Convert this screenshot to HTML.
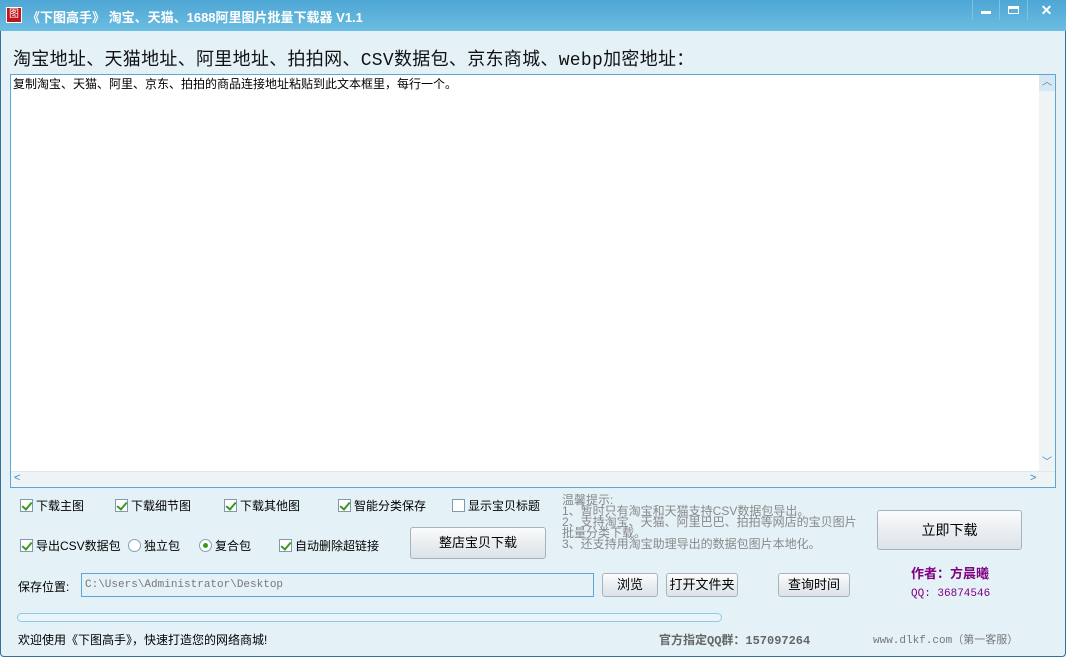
<!DOCTYPE html>
<html><head><meta charset="utf-8"><style>
*{margin:0;padding:0;box-sizing:border-box}
body{width:1066px;height:657px;overflow:hidden;background:#e4f2f8;font-family:"Liberation Sans","Noto Sans CJK SC",sans-serif;font-size:12px;color:#000;position:relative}
.a{position:absolute;white-space:nowrap}
.title{left:0;top:0;width:1066px;height:31px;background:linear-gradient(#4ea6d4,#5fb4dc 60%,#6dbde2);}
.btn{position:absolute;border:1px solid #a6b3bd;border-radius:3px;background:linear-gradient(#fbfcfd,#e9eef1 50%,#dce3e8);text-align:center;font-size:13px}
.cb{display:inline-block;width:13px;height:13px;border:1px solid #8098b0;background:#fff;vertical-align:-2px;margin-right:3px;position:relative}
.cb.c::after{content:"";position:absolute;left:3px;top:0px;width:4px;height:8px;border:solid #3a9a20;border-width:0 2px 2px 0;transform:rotate(40deg)}
.rb{display:inline-block;width:13px;height:13px;border:1px solid #8aa0b4;border-radius:50%;background:#fff;vertical-align:-2px;margin-right:3px;position:relative}
.rb.c::after{content:"";position:absolute;left:3px;top:3px;width:5px;height:5px;border-radius:50%;background:#3a9a20}
.m{font-family:"Liberation Mono","Noto Sans CJK SC",monospace}
</style></head><body>
<div class="a title"></div>
<div class="a" style="left:6px;top:7px;width:16px;height:16px;background:#c0151c;border:1px solid #fff;color:#fff;font-size:10px;line-height:14px;text-align:center">图</div>
<div class="a" style="left:27px;top:7px;color:#fff;font-weight:bold;font-size:13px">《下图高手》 淘宝、天猫、1688阿里图片批量下载器 V1.1</div>
<div class="a" style="left:972px;top:0;width:28px;height:20px;border-left:1px solid #7cc3e4"></div>
<div class="a" style="left:981px;top:11px;width:10px;height:3px;background:#fff"></div>
<div class="a" style="left:999px;top:0;width:28px;height:20px;border-left:1px solid #7cc3e4"></div>
<div class="a" style="left:1008px;top:6px;width:11px;height:8px;border:2px solid #fff;border-width:3px 1px 1px 1px"></div>
<div class="a" style="left:1027px;top:0;width:38px;height:20px;border-left:1px solid #7cc3e4;color:#fff;font-weight:bold;font-size:14px;text-align:center;line-height:20px">✕</div>
<div class="a m" style="left:13px;top:45px;font-size:18px;color:#111;letter-spacing:0.3px">淘宝地址、天猫地址、阿里地址、拍拍网、CSV数据包、京东商城、webp加密地址：</div>
<div class="a" style="left:10px;top:74px;width:1046px;height:414px;background:#fff;border:1px solid #5aa6d6"></div>
<div class="a" style="left:13px;top:75px;font-size:12px">复制淘宝、天猫、阿里、京东、拍拍的商品连接地址粘贴到此文本框里，每行一个。</div>
<div class="a" style="left:1039px;top:75px;width:16px;height:396px;background:#eef3f6"></div>
<div class="a" style="left:1039px;top:75px;width:16px;height:16px;background:#d8e8f2;color:#3b85c4;font-size:10px;text-align:center;line-height:16px">︿</div>
<div class="a" style="left:1039px;top:455px;width:16px;height:16px;color:#3b85c4;font-size:10px;text-align:center;line-height:16px">﹀</div>
<div class="a" style="left:11px;top:471px;width:1044px;height:16px;background:#eef3f6;border-top:1px solid #e0e8ee"></div>
<div class="a" style="left:14px;top:472px;color:#3b85c4;font-size:11px">&lt;</div>
<div class="a" style="left:1030px;top:472px;color:#3b85c4;font-size:11px">&gt;</div>

<div class="a" style="left:20px;top:497px;font-size:12px"><span class="cb c"></span>下载主图</div>
<div class="a" style="left:115px;top:497px"><span class="cb c"></span>下载细节图</div>
<div class="a" style="left:224px;top:497px"><span class="cb c"></span>下载其他图</div>
<div class="a" style="left:338px;top:497px"><span class="cb c"></span>智能分类保存</div>
<div class="a" style="left:452px;top:497px"><span class="cb"></span>显示宝贝标题</div>
<div class="a" style="left:20px;top:537px"><span class="cb c"></span>导出CSV数据包</div>
<div class="a" style="left:128px;top:537px"><span class="rb"></span>独立包</div>
<div class="a" style="left:199px;top:537px"><span class="rb c"></span>复合包</div>
<div class="a" style="left:279px;top:537px"><span class="cb c"></span>自动删除超链接</div>
<div class="btn" style="left:410px;top:527px;width:136px;height:32px;line-height:30px">整店宝贝下载</div>
<div class="a" style="left:562px;top:495px;color:#888;font-size:12px;line-height:11px;white-space:pre">温馨提示:
1、暂时只有淘宝和天猫支持CSV数据包导出。
2、支持淘宝、天猫、阿里巴巴、拍拍等网店的宝贝图片
批量分类下载。
3、还支持用淘宝助理导出的数据包图片本地化。</div>
<div class="btn" style="left:877px;top:510px;width:145px;height:40px;line-height:38px;font-size:14px">立即下载</div>
<div class="a" style="left:911px;top:563px;color:#800080;font-size:13px;font-weight:bold">作者：方晨曦</div>
<div class="a m" style="left:911px;top:588px;color:#800080;font-size:11px">QQ: 36874546</div>
<div class="a" style="left:18px;top:578px;font-size:12px">保存位置:</div>
<div class="a" style="left:81px;top:573px;width:513px;height:24px;background:#e4f2f8;border:1px solid #5aa6d6;font-family:'Liberation Mono',monospace;font-size:11px;color:#777;padding:5px 3px">C:\Users\Administrator\Desktop</div>
<div class="btn" style="left:602px;top:573px;width:56px;height:24px;line-height:22px">浏览</div>
<div class="btn" style="left:666px;top:573px;width:72px;height:24px;line-height:22px">打开文件夹</div>
<div class="btn" style="left:778px;top:573px;width:72px;height:24px;line-height:22px">查询时间</div>
<div class="a" style="left:17px;top:613px;width:705px;height:9px;border:1px solid #8fc9ec;border-radius:5px;background:#eaf5fb"></div>
<div class="a" style="left:18px;top:631px;font-size:12px">欢迎使用《下图高手》，快速打造您的网络商城!</div>
<div class="a m" style="left:659px;top:631px;font-size:12px;font-weight:bold;color:#666">官方指定QQ群：157097264</div>
<div class="a m" style="left:873px;top:631px;font-size:11px;color:#777">www.dlkf.com（第一客服）</div>
<div class="a" style="left:0;top:31px;width:1066px;height:626px;border:1px solid #3a6f94;border-top:none;border-radius:0 0 4px 4px"></div>
</body></html>
